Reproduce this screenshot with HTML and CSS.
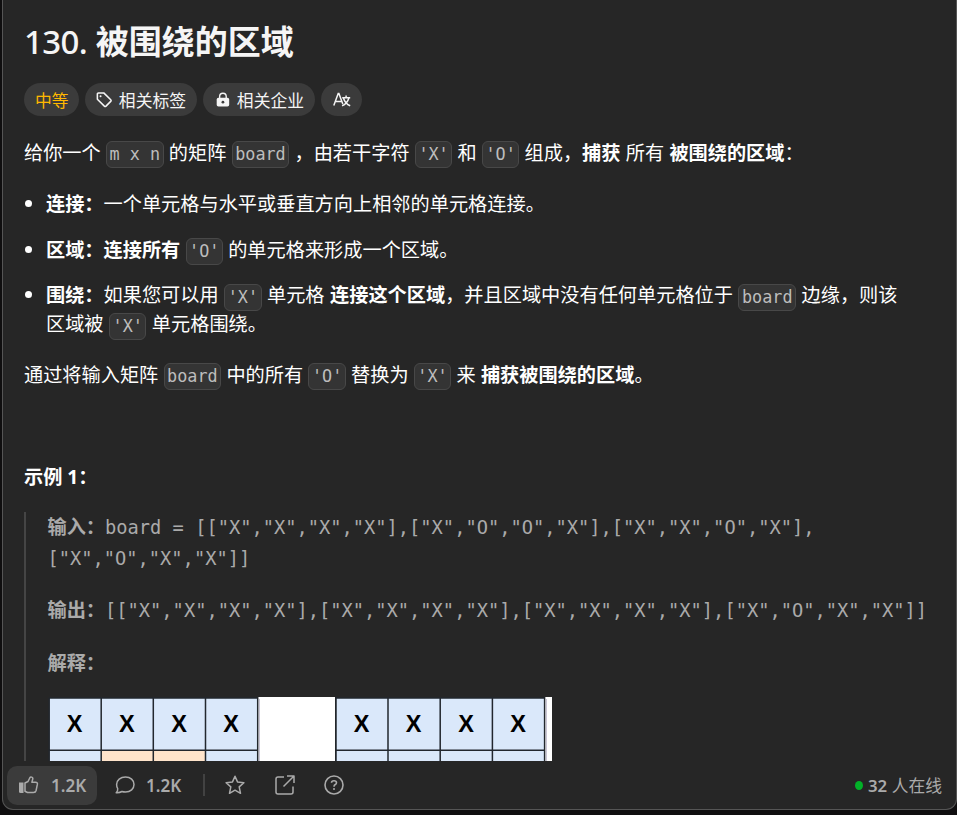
FILE: index.html
```html
<!DOCTYPE html>
<html lang="zh-CN">
<head>
<meta charset="utf-8">
<title>130. 被围绕的区域</title>
<link rel="stylesheet" href="styles.css">
</head>
<body>
<main class="panel">
  <div class="content">
    <h1><span class="number">130.</span> 被围绕的区域</h1>
    <div class="tags">
      <span class="tag level">中等</span>
      <span class="tag topics"><svg width="18" height="18" viewBox="0 0 18 18" fill="none" stroke="#f5f5f5" stroke-width="1.7" stroke-linejoin="round"><path d="M1.5 2.5Q1.5 1.2 2.8 1.2H8.5L16.2 8.7Q17 9.6 16.2 10.5L11 15.7Q10.1 16.5 9.2 15.7L1.5 8.2Z"/><circle cx="5" cy="4.8" r="1.1" fill="#f5f5f5" stroke="none"/></svg>相关标签</span>
      <span class="tag companies"><svg width="16" height="18" viewBox="0 0 16 18"><path d="M4.2 8V5a3.8 3.8 0 0 1 7.6 0v3" fill="none" stroke="#f5f5f5" stroke-width="1.6"/><rect x=".8" y="6.5" width="14.4" height="10" rx="2" fill="#f5f5f5"/><circle cx="8" cy="11.5" r="1.6" fill="#3b3b3b"/></svg>相关企业</span>
      <span class="tag translate"><svg width="18" height="16" viewBox="0 0 18 16" fill="none" stroke="#f5f5f5" stroke-width="1.5"><path d="M.8 13.5 5.2 1.4h.7L9.8 12M2.4 9.4h6.2M9.2 5.7h8M13.1 3.5v2.2M10.3 5.7Q12.2 11.7 17.2 13.8M16 5.7Q14.2 11.7 9.1 13.8"/></svg></span>
    </div>
    <p class="intro">给你一个 <code>m x n</code> 的矩阵 <code>board</code> ，由若干字符 <code>'X'</code> 和 <code>'O'</code> 组成，<strong>捕获</strong> 所有 <strong>被围绕的区域</strong>：</p>
    <ul>
      <li><strong>连接：</strong>一个单元格与水平或垂直方向上相邻的单元格连接。</li>
      <li><strong>区域：连接所有</strong> <code>'O'</code> 的单元格来形成一个区域。</li>
      <li><strong>围绕：</strong>如果您可以用 <code>'X'</code> 单元格 <strong>连接这个区域</strong>，并且区域中没有任何单元格位于 <code>board</code> 边缘，则该<br>区域被 <code>'X'</code> 单元格围绕。</li>
    </ul>
    <p class="task">通过将输入矩阵 <code>board</code> 中的所有 <code>'O'</code> 替换为 <code>'X'</code> 来 <strong>捕获被围绕的区域</strong>。</p>
    <p class="example"><strong>示例 1：</strong></p>
    <div class="quote">
      <p><strong>输入：</strong><span class="mono">board = [["X","X","X","X"],["X","O","O","X"],["X","X","O","X"],<br>["X","O","X","X"]]</span></p>
      <p><strong>输出：</strong><span class="mono">[["X","X","X","X"],["X","X","X","X"],["X","X","X","X"],["X","O","X","X"]]</span></p>
      <p><strong>解释：</strong></p>
      <svg class="figure" width="504" height="65" viewBox="0 0 504 65">
        <path fill="#fff" d="M210 0h77v65h-77zM496 0h8v65h-8z"/>
        <path fill="#dae8fa" d="M1 1h209v64H1zM288 1h209v64H288z"/>
        <path fill="#ffe4cb" d="M53 53h104v12H53z"/>
        <path fill="none" stroke="#c9c5d5" d="M211.5 2v63M498.500 2v63"/>
        <path fill="none" stroke="#22272e" stroke-width="1.5" d="M1 1h209M1 53.300h209M1.200 1v64M53.200 0v65M105.300 0v65M157.500 0v65M209.700 0v65M288 1h209M288 53.300h209M288 0v65M340 0v65M392.200 0v65M444.400 0v65M496.600 0v65"/>
        <g class="cells"><text x="26.700" y="35">X</text><text x="78.800" y="35">X</text><text x="131" y="35">X</text><text x="183" y="35">X</text><text x="313.500" y="35">X</text><text x="365.700" y="35">X</text><text x="418" y="35">X</text><text x="470" y="35">X</text></g>
      </svg>
    </div>
  </div>
  <footer>
    <button class="like"><svg width="20" height="18" viewBox="0 0 20 18"><path fill="#aaa" d="M0 6.500h4.500v10.500H1.500Q0 17 0 15.500z"/><path d="M6 7 9 5.500 11 1.500Q11.500.7 12.700 1.100 14.200 1.700 13.700 3.300L12.900 6.200H16.500Q18.700 6.200 18.400 8.200L17.100 14.500Q16.600 16.500 14.500 16.500H8.500L6 15.300Z" fill="none" stroke="#aaa" stroke-width="1.500" stroke-linejoin="round"/></svg>1.2K</button>
    <button class="comments"><svg width="20" height="18" viewBox="0 0 20 18" fill="none" stroke="#aaa" stroke-width="1.500" stroke-linejoin="round"><path d="M10.500 1C15.500 1 19 4.200 19 8.500S15.500 16 10.500 16Q8.500 16 7 15.500 4.300 17 1.200 16.700 3 15 2.700 12.600 1.600 10.800 1.600 8.500C1.600 4.200 5.500 1 10.500 1Z"/></svg>1.2K</button>
    <i class="divider"></i>
    <svg class="star" width="20" height="20" viewBox="0 0 20 20" fill="none" stroke="#aaa" stroke-width="1.500" stroke-linejoin="round"><path d="m10 1.200 2.500 5.700 6.400.8-4.700 4.200 1.300 6.400L10 15.200l-5.500 3.100 1.300-6.400-4.700-4.200 6.400-.8z"/></svg>
    <svg class="share" width="20" height="20" viewBox="0 0 20 20" fill="none" stroke="#aaa" stroke-width="1.500" stroke-linejoin="round"><path d="M9 2H3Q1 2 1 4v13q0 2 2 2h13q2 0 2-2v-5.500M12 1h7v7M19 1 8.500 11.500"/></svg>
    <svg class="help" width="20" height="20" viewBox="0 0 20 20" fill="none" stroke="#aaa" stroke-width="1.600"><circle cx="10" cy="10" r="9"/><path d="M7.500 7.800Q7.600 5.700 10 5.700t2.500 2Q12.500 9 11 9.800 10 10.400 10 11.700"/><circle cx="10" cy="14" r="1" fill="#aaa" stroke="none"/></svg>
    <span class="online"><i class="dot"></i><b>32</b> 人在线</span>
  </footer>
</main>
</body>
</html>
```
FILE: styles.css
```css
* { box-sizing: border-box; }
body {
  margin: 0;
  height: 815px;
  padding-left: 2px;
  overflow: hidden;
  background: #0f0e0f;
  color: #fff;
  font: 19.2px/29px "Noto Sans", "Noto Sans CJK SC", sans-serif;
  white-space: nowrap;
  text-spacing-trim: space-all;
}
.panel {
  width: 955px;
  height: 810px;
  display: flex;
  flex-direction: column;
  background: #262626;
  border: 1px solid #555;
  border-top: 0;
  border-radius: 0 0 11px 11px;
}
.content { height: 761px; padding: 20px 0 0 21px; overflow: hidden; flex: none; }
h1 { margin: 0; font-size: 33px; line-height: 44px; font-weight: 700; color: #f5f5f5; }
.number { font-weight: 500; letter-spacing: -.6px; }
p { margin: 0; }
.tags { display: flex; gap: 6px; margin-top: 19px; height: 33px; }
.tag {
  display: flex;
  align-items: center;
  height: 33px;
  padding: 1px 11px 0;
  border-radius: 17px;
  background: #3b3b3b;
  color: #f5f5f5;
  font-size: 16.8px;
}
.level { width: 54.5px; color: #ffb800; }
.topics { width: 112.500px; gap: 7px; }
.companies { width: 112px; padding-left: 13px; gap: 7px; }
.translate { width: 41px; padding-left: 12px; }
code {
  display: inline-block;
  height: 27px;
  padding: 0 2.500px;
  border: 1px solid #484848;
  border-radius: 6px;
  background: #343434;
  color: #bdbdbd;
  font: 16.8px/25px "DejaVu Sans Mono", monospace;
  word-spacing: 0;
  vertical-align: middle;
  margin: -3px 0;
}
.intro, li, .task { word-spacing: .28px; }
.intro { margin-top: 22px; }
ul { margin: 22px 0 0; padding: 0 0 0 22px; list-style: none; }
li { position: relative; margin-bottom: 16.600px; }
li:last-child { word-spacing: .5px; }
li::before {
  content: "";
  position: absolute;
  left: -21px;
  top: 11px;
  width: 7px;
  height: 7px;
  border-radius: 50%;
  background: #fff;
}
.task { margin-top: 21.800px; }
.example { margin-top: 73px; }
.quote { margin-top: 21.200px; height: 300px; padding-left: 21.500px; border-left: 2px solid #454545; color: #aaa; }
.quote p { line-height: 29.500px; margin-bottom: 22px; }
.quote p:nth-child(3) { margin-bottom: 20px; }
.mono { font: 18.720px/29.500px "DejaVu Sans Mono", monospace; }
.figure { display: block; }
.cells { font: 700 23.500px "Liberation Sans", sans-serif; text-anchor: middle; }
footer { height: 48px; display: flex; align-items: center; padding-left: 4px; color: #aaa; }
button {
  display: flex;
  align-items: center;
  height: 39px;
  padding: 0;
  border: 0;
  background: none;
  color: #aaa;
  font: 600 17px "Noto Sans", sans-serif;
}
.like { width: 90px; padding-left: 12px; gap: 12px; background: #3b3b3b; border-radius: 10px; }
.comments { margin-left: 18px; gap: 11px; width: 88px; }
.divider { width: 2px; height: 22px; background: #424242; }
.star { margin-left: 20px; }
.share { margin-left: 30px; }
.help { margin-left: 29px; }
.online { display: flex; align-items: center; gap: 4.500px; margin-left: auto; margin-right: 14px; font-size: 16.800px; }
.online b { font-weight: 600; }
.dot { width: 8px; height: 9px; border-radius: 50%; background: #02b128; }
```
